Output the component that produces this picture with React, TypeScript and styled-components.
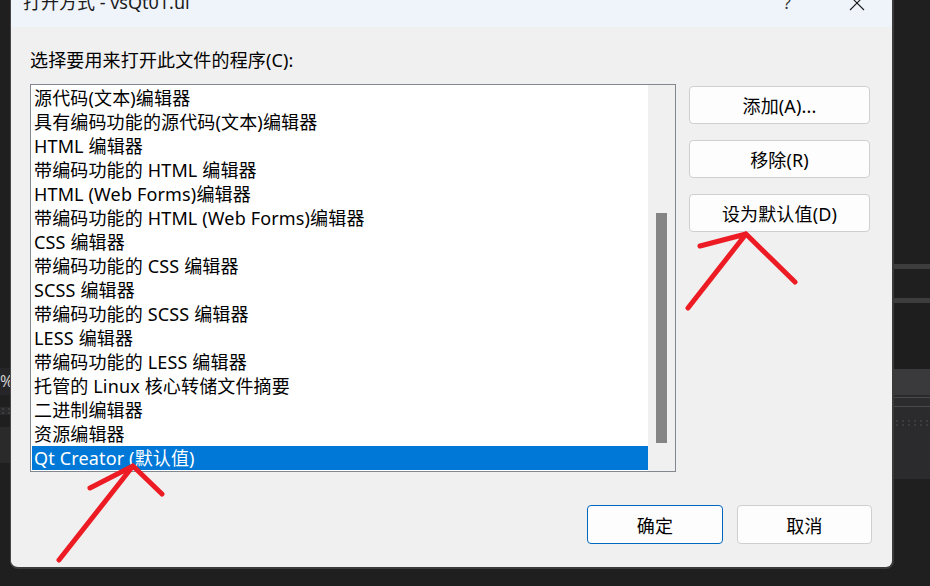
import React from "react";
import styled, { createGlobalStyle } from "styled-components";

const GlobalStyle = createGlobalStyle`
  html, body { margin: 0; padding: 0; background: #1f1f1f; }
  body { font-family: "Noto Sans", "Noto Sans CJK SC", sans-serif; }
`;

const Page = styled.div`
  position: relative;
  display: flex;
  width: 930px;
  height: 586px;
  overflow: hidden;
  background: #1f1f1f;
`;

const Edge = styled.div<{ $w: number }>`
  width: ${(p) => p.$w}px;
  flex: ${(p) => (p.$w ? "none" : "1")};
  display: flex;
  flex-direction: column;
  overflow: hidden;
`;

const Band = styled.div<{ $h: number; $c: string }>`
  height: ${(p) => p.$h}px;
  flex: none;
  background: ${(p) => p.$c};
  color: #cfcfcf;
  font-size: 16px;
  line-height: ${(p) => p.$h}px;
  overflow: hidden;
  white-space: nowrap;
`;

const Dots = styled.div`
  height: 8px;
  flex: none;
  background-image: radial-gradient(#3d3d40 1px, transparent 1.5px);
  background-size: 6px 4px;
  background-color: #2a2a2c;
`;

const Dialog = styled.div`
  width: 881px;
  height: 567px;
  flex: none;
  display: flex;
  flex-direction: column;
  background: #f0f0f0;
  border-left: 1px solid #474747;
  border-right: 2px solid #3b3b3b;
  border-bottom: 2px solid #3b3b3b;
  border-radius: 0 0 8px 8px;
  overflow: hidden;
`;

const TitleBar = styled.div`
  height: 27px;
  flex: none;
  display: flex;
  align-items: flex-start;
  background: #eff3fa;
  padding-left: 12px;
  overflow: hidden;
`;

const TitleText = styled.div`
  font-size: 18px;
  line-height: 18px;
  margin-top: -7px;
  color: #1b1b1b;
  white-space: nowrap;
  flex: 1;
`;

const Help = styled.div`
  font-size: 17px;
  line-height: 18px;
  margin-top: -6px;
  color: #333;
  margin-right: 58px;
`;

const CloseIcon = styled.svg`
  width: 16px;
  height: 16px;
  margin-top: -5px;
  margin-right: 27px;
`;

const Body = styled.div`
  flex: 1;
  display: flex;
  flex-direction: column;
  padding: 21px 20px 0 19px;
`;

const Label = styled.div`
  font-size: 18px;
  line-height: 24px;
  letter-spacing: 0.15px;
  color: #000;
  white-space: nowrap;
`;

const Main = styled.div`
  display: flex;
  gap: 13px;
  margin-top: 12px;
  height: 388px;
`;

const ListBox = styled.div`
  width: 646px;
  height: 388px;
  box-sizing: border-box;
  border: 1px solid #828790;
  background: #fff;
  display: flex;
`;

const Items = styled.div`
  flex: 1;
  padding: 1px 0 0 1px;
  display: flex;
  flex-direction: column;
`;

const Row = styled.div<{ $selected?: boolean }>`
  height: 24px;
  line-height: 24px;
  padding-left: 2px;
  font-size: 18px;
  letter-spacing: 0.15px;
  white-space: nowrap;
  color: ${(p) => (p.$selected ? "#fff" : "#000")};
  background: ${(p) => (p.$selected ? "#0078d7" : "transparent")};
`;

const ScrollTrack = styled.div`
  width: 27px;
  flex: none;
  background: #f0f0f0;
  padding-left: 8px;
  box-sizing: border-box;
`;

const Thumb = styled.div`
  width: 11px;
  height: 230px;
  margin-top: 128px;
  background: #858585;
`;

const SideButtons = styled.div`
  width: 181px;
  display: flex;
  flex-direction: column;
  gap: 16px;
  padding-top: 2px;
`;

const Button = styled.div<{ $primary?: boolean; $w?: number; $h: number }>`
  box-sizing: border-box;
  width: ${(p) => (p.$w ? `${p.$w}px` : "100%")};
  height: ${(p) => p.$h}px;
  display: flex;
  align-items: center;
  justify-content: center;
  font-size: 18px;
  letter-spacing: 0.15px;
  color: #000;
  background: #fdfdfd;
  border: 1px solid ${(p) => (p.$primary ? "#0067c0" : "#cfcfcf")};
  border-radius: 4px;
`;

const Footer = styled.div`
  display: flex;
  justify-content: flex-end;
  gap: 14px;
  margin-top: 33px;
`;

const Annotations = styled.svg`
  position: absolute;
  left: 0;
  top: 0;
  width: 930px;
  height: 586px;
  pointer-events: none;
`;

const items = [
  "源代码(文本)编辑器",
  "具有编码功能的源代码(文本)编辑器",
  "HTML 编辑器",
  "带编码功能的 HTML 编辑器",
  "HTML (Web Forms)编辑器",
  "带编码功能的 HTML (Web Forms)编辑器",
  "CSS 编辑器",
  "带编码功能的 CSS 编辑器",
  "SCSS 编辑器",
  "带编码功能的 SCSS 编辑器",
  "LESS 编辑器",
  "带编码功能的 LESS 编辑器",
  "托管的 Linux 核心转储文件摘要",
  "二进制编辑器",
  "资源编辑器",
  "Qt Creator (默认值)",
];

export default function App() {
  return (
    <>
      <GlobalStyle />
      <Page>
        <Edge $w={10}>
          <Band $h={368} $c="#1f1f1f" />
          <Band $h={27} $c="#262628">%</Band>
          <Band $h={12} $c="#1f1f1f" />
          <Dots />
          <Band $h={12} $c="#1f1f1f" />
          <Band $h={36} $c="#2a2a2a" />
          <Band $h={120} $c="#1f1f1f" />
        </Edge>
        <Dialog>
          <TitleBar>
            <TitleText>打开方式 - vsQt01.ui</TitleText>
            <Help>?</Help>
            <CloseIcon viewBox="0 0 16 16">
              <path d="M1 1 L15 15 M15 1 L1 15" stroke="#1b1b1b" strokeWidth="1.1" fill="none" />
            </CloseIcon>
          </TitleBar>
          <Body>
            <Label>选择要用来打开此文件的程序(C):</Label>
            <Main>
              <ListBox>
                <Items>
                  {items.map((t, i) => (
                    <Row key={t} $selected={i === items.length - 1}>
                      {t}
                    </Row>
                  ))}
                </Items>
                <ScrollTrack>
                  <Thumb />
                </ScrollTrack>
              </ListBox>
              <SideButtons>
                <Button $h={38}>添加(A)...</Button>
                <Button $h={38}>移除(R)</Button>
                <Button $h={38}>设为默认值(D)</Button>
              </SideButtons>
            </Main>
            <Footer>
              <Button $primary $w={136} $h={39}>确定</Button>
              <Button $w={135} $h={39}>取消</Button>
            </Footer>
          </Body>
        </Dialog>
        <Edge $w={0}>
          <Band $h={264} $c="#1f1f1f" />
          <Band $h={5} $c="#3d3d3d" />
          <Band $h={29} $c="#1f1f1f" />
          <Band $h={5} $c="#3d3d3d" />
          <Band $h={66} $c="#1e1e1e" />
          <Band $h={26} $c="#3a3a3d" />
          <Band $h={2} $c="#2a2a2c" />
          <Band $h={1} $c="#4a4a4c" />
          <Band $h={8} $c="#2c2c2e" />
          <Band $h={1} $c="#4a4a4c" />
          <Band $h={12} $c="#2b2b2d" />
          <Dots />
          <Band $h={52} $c="#2b2b2d" />
          <Band $h={106} $c="#1f1f1f" />
        </Edge>
        <Annotations viewBox="0 0 930 586">
          <g stroke="#ed1c24" strokeWidth="5" strokeLinecap="round" fill="none">
            <path d="M746 234 L688 308 M746 234 L700 246 M746 234 L795 282" />
            <path d="M133 466 L59 560 M133 466 L90 488 M133 466 L162 494" />
          </g>
        </Annotations>
      </Page>
    </>
  );
}
